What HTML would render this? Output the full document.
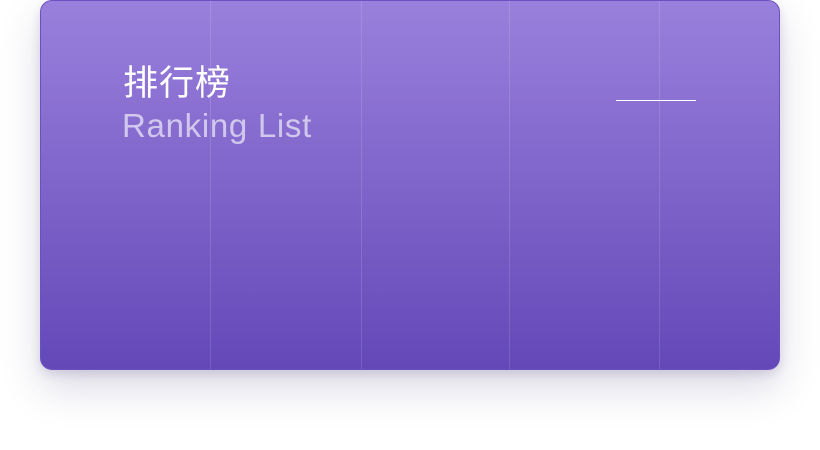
<!DOCTYPE html>
<html><head><meta charset="utf-8"><style>
html,body{margin:0;padding:0;background:#fff;width:820px;height:450px;overflow:hidden}
.card{position:absolute;left:40px;top:0;width:738px;height:368px;border:1px solid #6a50c0;border-radius:12px;
background:linear-gradient(#9a80dc,#6448b8);box-shadow:0 18px 40px rgba(60,50,110,0.18),0 4px 10px rgba(60,50,110,0.15);overflow:hidden}
.v{position:absolute;top:0;width:1px;height:100%;background:rgba(255,255,255,0.13)}
.t1{position:absolute;left:82px;top:61px;color:#fff;font:35px "Liberation Sans","Noto Sans CJK SC",sans-serif;line-height:44px;letter-spacing:1px}
.t2{position:absolute;left:81px;top:104px;color:rgba(255,255,255,0.62);font:300 33px "Liberation Sans",sans-serif;line-height:42px;letter-spacing:0.7px}
.h{position:absolute;left:575px;top:99px;width:80px;height:1px;background:#fff}
</style></head><body>
<div class="card">
<div class="v" style="left:169px"></div>
<div class="v" style="left:320px"></div>
<div class="v" style="left:468px"></div>
<div class="v" style="left:618px"></div>
<div class="t1">排行榜</div>
<div class="t2">Ranking List</div>
<div class="h"></div>
</div>
</body></html>
